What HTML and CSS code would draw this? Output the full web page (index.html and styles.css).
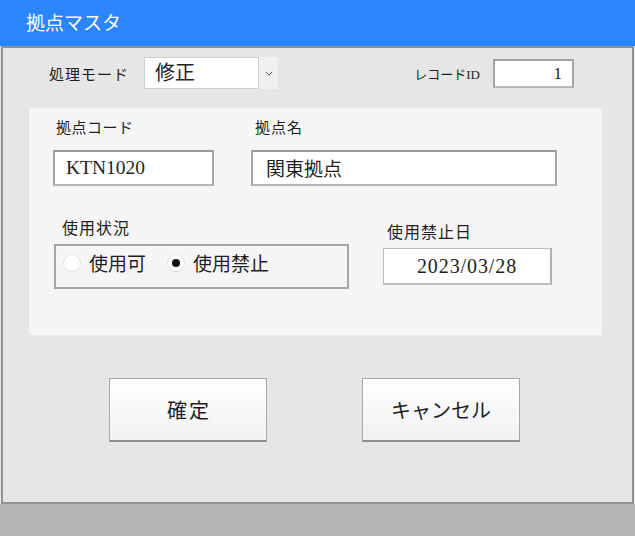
FILE: index.html
```html
<!DOCTYPE html>
<html lang="ja">
<head>
<meta charset="utf-8">
<title>拠点マスタ</title>
<link rel="stylesheet" href="styles.css">
</head>
<body>
<div class="window">
  <header class="titlebar">拠点マスタ</header>
  <main class="frame">
    <div class="toprow">
      <span class="lbl-mode">処理モード</span>
      <div class="select">
        <span class="select-value">修正</span>
        <span class="select-btn">
          <svg width="8" height="5" viewBox="0 0 8 5"><path d="M1 1 L4 4 L7 1" fill="none" stroke="#555" stroke-width="1"/></svg>
        </span>
      </div>
      <span class="lbl-id">レコードID</span>
      <div class="idbox">1</div>
    </div>

    <section class="panel">
      <div class="row-a">
        <div class="col">
          <span class="lbl lbl-code">拠点コード</span>
          <div class="field field-code">KTN1020</div>
        </div>
        <div class="col">
          <span class="lbl lbl-name">拠点名</span>
          <div class="field field-name">関東拠点</div>
        </div>
      </div>
      <div class="row-b">
        <div class="col">
          <span class="lbl lbl-status">使用状況</span>
          <div class="radiogroup">
            <span class="radio"></span><span class="radio-text">使用可</span>
            <span class="radio checked"></span><span class="radio-text">使用禁止</span>
          </div>
        </div>
        <div class="col col-date">
          <span class="lbl lbl-date">使用禁止日</span>
          <div class="datebox">2023/03/28</div>
        </div>
      </div>
    </section>

    <div class="buttons">
      <button class="btn btn-ok">確定</button>
      <button class="btn">キャンセル</button>
    </div>
  </main>
  <footer class="bottom"></footer>
</div>
</body>
</html>
```

FILE: styles.css
```css
html, body {
  margin: 0;
  padding: 0;
}
body {
  width: 635px;
  height: 536px;
  overflow: hidden;
  background: #e6e6e6;
  font-family: "Noto Sans CJK JP", "Liberation Sans", sans-serif;
  color: #1e1e1e;
}
.window {
  display: flex;
  flex-direction: column;
  width: 635px;
  height: 536px;
}
.titlebar {
  height: 46px;
  flex: none;
  box-sizing: border-box;
  background: #2b85fd;
  color: #fff;
  font-size: 19px;
  line-height: 44px;
  padding-left: 26px;
}
.frame {
  flex: none;
  height: 458px;
  box-sizing: border-box;
  margin-left: 1px;
  width: 633px;
  border: 2px solid #929292;
  background: #e6e6e6;
}
.bottom {
  flex: 1;
  background: #b4b4b4;
}

/* top row */
.toprow {
  display: flex;
  align-items: center;
  height: 32px;
  margin-top: 9px;
  padding-left: 46px;
  padding-right: 58px;
}
.lbl-mode {
  width: 95px;
  font-size: 15px;
  letter-spacing: 1px;
}
.select {
  display: flex;
  height: 32px;
  width: 134px;
}
.select-value {
  flex: 1;
  box-sizing: border-box;
  background: #fff;
  border: 1px solid #cdcdcd;
  font-size: 20px;
  line-height: 28px;
  padding-left: 10px;
}
.select-btn {
  width: 19px;
  background: #f0f0f0;
  display: flex;
  align-items: center;
  justify-content: center;
}
.lbl-id {
  margin-left: auto;
  margin-right: 13px;
  font-size: 13px;
  font-family: "Liberation Serif", "Noto Sans CJK JP", serif;
}
.idbox {
  width: 81px;
  height: 29px;
  box-sizing: border-box;
  background: #fff;
  border: 2px solid #a3a3a3;
  border-bottom-color: #b8b8b8;
  text-align: right;
  padding-right: 10px;
  font-family: "Liberation Serif", serif;
  font-size: 17px;
  line-height: 25px;
}

/* panel */
.panel {
  margin-top: 19px;
  margin-left: 26px;
  width: 573px;
  height: 227px;
  box-sizing: border-box;
  background: #f5f5f5;
  padding-top: 10px;
}
.col {
  display: flex;
  flex-direction: column;
}
.lbl {
  font-size: 15px;
  line-height: 18px;
  height: 18px;
  white-space: nowrap;
}
.row-a {
  display: grid;
  grid-template-columns: 161px 306px;
  column-gap: 37px;
  padding-left: 24px;
}
.row-a .lbl {
  margin-bottom: 14px;
}
.lbl-code { padding-left: 3px; letter-spacing: 0.5px; }
.lbl-name { padding-left: 4px; letter-spacing: 1px; }
.field {
  height: 36px;
  box-sizing: border-box;
  background: #fff;
  border: 2px solid #a5a5a5;
  border-top-color: #9a9a9a;
  border-bottom-color: #b5b5b5;
  font-size: 19px;
  line-height: 32px;
  padding-left: 11px;
}
.field-code {
  font-family: "Liberation Serif", serif;
  font-size: 19.5px;
}
.field-name {
  padding-left: 13px;
}

.row-b {
  display: grid;
  grid-template-columns: 295px 169px;
  column-gap: 34px;
  padding-left: 25px;
  margin-top: 32px;
}
.row-b .lbl {
  margin-bottom: 8px;
  font-size: 16px;
  letter-spacing: 1px;
}
.lbl-status { padding-left: 8px; }
.col-date { padding-top: 4px; }
.lbl-date { padding-left: 4px; }

.radiogroup {
  height: 45px;
  box-sizing: border-box;
  border: 2px solid #a5a5a5;
  display: flex;
  align-items: center;
  padding-left: 7px;
  padding-bottom: 8px;
  font-size: 19px;
}
.radio {
  width: 18px;
  height: 18px;
  box-sizing: border-box;
  border-radius: 50%;
  background: #fff;
  border: 1px solid #e0e0e0;
  position: relative;
  flex: none;
}
.radio.checked::after {
  content: "";
  position: absolute;
  left: 4px;
  top: 4px;
  width: 8px;
  height: 8px;
  border-radius: 50%;
  background: #111;
}
.radio-text {
  margin-left: 8px;
  margin-right: 21px;
}
.datebox {
  height: 37px;
  box-sizing: border-box;
  background: #fff;
  border-style: solid;
  border-width: 1px 2px 2px 1px;
  border-color: #bdbdbd #b0b0b0 #c0c0c0 #bdbdbd;
  text-align: center;
  font-family: "Liberation Serif", serif;
  font-size: 20px;
  letter-spacing: 0.9px;
  line-height: 34px;
}

/* buttons */
.buttons {
  display: flex;
  gap: 95px;
  margin-top: 43px;
  padding-left: 106px;
}
.btn {
  width: 158px;
  height: 64px;
  box-sizing: border-box;
  border: 1px solid #a9a9a9;
  border-bottom: 2px solid #8e8e8e;
  background: linear-gradient(#ffffff, #f1f1f1);
  font-family: "Noto Sans CJK JP", sans-serif;
  font-size: 20px;
  color: #1e1e1e;
  padding: 0;
}
.btn-ok {
  letter-spacing: 2px;
  text-indent: 2px;
}
```
